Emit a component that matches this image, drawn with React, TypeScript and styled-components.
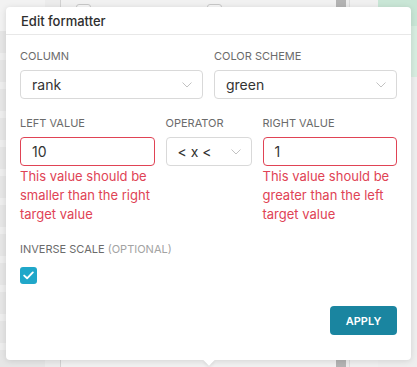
import React from "react";
import styled, { createGlobalStyle } from "styled-components";

const Global = createGlobalStyle`
  html, body { margin: 0; padding: 0; }
  body { font-family: Inter, "Noto Sans", sans-serif; background: #efefef; overflow: hidden; }
  * { box-sizing: border-box; }
`;

const Page = styled.div`
  position: relative;
  width: 417px;
  height: 367px;
  display: flex;
  overflow: hidden;
`;

const Sidebar = styled.div`
  width: 45px;
  flex-shrink: 0;
  background:
    linear-gradient(#f2f2f2 0 31px, transparent 31px),
    repeating-linear-gradient(#e6e6e6 0 22px, #eeeeee 22px 29px) 0 2px;
`;

const Gutter = styled.div`
  width: 16px;
  flex-shrink: 0;
  background: #ececec;
  border-right: 1px solid #d2d2d2;
`;

const Main = styled.div`
  width: 275px;
  flex-shrink: 0;
  background: #f1f1f1;
  display: flex;
  align-items: flex-start;
  gap: 116px;
  padding: 4px 0 0 15px;
`;

const GhostBox = styled.div`
  width: 15px;
  height: 15px;
  border: 1px solid #c8c8c8;
  border-radius: 3px;
  background: #f7f7f7;
`;

const Scroll = styled.div`
  width: 14px;
  flex-shrink: 0;
  background: #ececec;
  display: flex;
  justify-content: flex-start;
  border-right: 1px solid #dcdcdc;
`;

const Thumb = styled.div`
  width: 10px;
  background: #b3b3b3;
`;

const RightPane = styled.div`
  width: 28px;
  flex-shrink: 0;
  background: #f0f0f0;
`;

const Green = styled.div`
  flex: 1;
  background: linear-gradient(#c9e6d6 0 26px, #d7ede0 26px 77px, #eeeeee 77px);
`;

const Popover = styled.div`
  position: absolute;
  left: 6px;
  top: 7px;
  width: 405px;
  height: 353px;
  background: #fff;
  border-radius: 4px;
  box-shadow: 0 1px 6px rgba(0, 0, 0, 0.12);
  display: flex;
  flex-direction: column;
`;

const Arrow = styled.div`
  position: absolute;
  left: 199px;
  bottom: -4px;
  width: 8px;
  height: 8px;
  background: #fff;
  transform: rotate(45deg);
  box-shadow: 2px 2px 3px rgba(0, 0, 0, 0.06);
`;

const Header = styled.div`
  height: 28px;
  padding: 0 15px;
  display: flex;
  align-items: center;
  border-bottom: 1px solid #e8e8e8;
  font-size: 13px;
  font-weight: 500;
  color: #2e2e2e;
`;

const Body = styled.div`
  flex: 1;
  padding: 13px 14px 0 14px;
  display: flex;
  flex-direction: column;
`;

const Row = styled.div<{ $cols: string; $mb: number }>`
  display: grid;
  grid-template-columns: ${(p) => p.$cols};
  column-gap: 11px;
  margin-bottom: ${(p) => p.$mb}px;
`;

const Field = styled.div`
  display: flex;
  flex-direction: column;
`;

const Label = styled.div`
  font-size: 11px;
  line-height: 16px;
  color: #6b6b6b;
  text-transform: uppercase;
  margin-bottom: 6px;
  white-space: nowrap;
`;

const Optional = styled.span`
  color: #a3a3a3;
`;

const Box = styled.div<{ $error?: boolean }>`
  height: 29px;
  border: 1px solid ${(p) => (p.$error ? "#e04355" : "#d9d9d9")};
  border-radius: 4px;
  padding: 0 10px 0 11px;
  display: flex;
  align-items: center;
  justify-content: space-between;
  font-size: 14px;
  color: #333;
`;

const ErrorText = styled.div`
  font-size: 13px;
  line-height: 19px;
  color: #e04355;
  margin-top: 1px;
`;

const Check = styled.div`
  width: 17px;
  height: 17px;
  border-radius: 3px;
  background: #20a7c9;
  display: flex;
  align-items: center;
  justify-content: center;
  margin-top: 4px;
`;

const Footer = styled.div`
  display: flex;
  justify-content: flex-end;
  margin-top: 22px;
`;

const Button = styled.button`
  width: 67px;
  height: 29px;
  border: none;
  border-radius: 4px;
  background: #1a85a0;
  color: #fff;
  font-family: Inter, sans-serif;
  font-size: 11px;
  font-weight: 600;
  padding: 0;
`;

const Chevron = () => (
  <svg width="10" height="6" viewBox="0 0 10 6" fill="none">
    <path d="M0.5 0.5 L5 5 L9.5 0.5" stroke="#c2c2c2" strokeWidth="1" />
  </svg>
);

export default function App() {
  return (
    <>
      <Global />
      <Page>
        <Sidebar />
        <Gutter />
        <Main>
          <GhostBox />
          <GhostBox />
        </Main>
        <Scroll>
          <Thumb />
        </Scroll>
        <RightPane />
        <Green />
        <Popover>
          <Header>Edit formatter</Header>
          <Body>
            <Row $cols="1fr 1fr" $mb={16}>
              <Field>
                <Label>Column</Label>
                <Box>
                  rank
                  <Chevron />
                </Box>
              </Field>
              <Field>
                <Label>Color scheme</Label>
                <Box>
                  green
                  <Chevron />
                </Box>
              </Field>
            </Row>
            <Row $cols="1fr 86px 1fr" $mb={17}>
              <Field>
                <Label>Left value</Label>
                <Box $error>10</Box>
                <ErrorText>This value should be smaller than the right target value</ErrorText>
              </Field>
              <Field>
                <Label>Operator</Label>
                <Box>
                  {"< x <"}
                  <Chevron />
                </Box>
              </Field>
              <Field>
                <Label>Right value</Label>
                <Box $error>1</Box>
                <ErrorText>This value should be greater than the left target value</ErrorText>
              </Field>
            </Row>
            <Label>
              Inverse scale <Optional>(Optional)</Optional>
            </Label>
            <Check>
              <svg width="11" height="9" viewBox="0 0 11 9" fill="none">
                <path d="M1.2 4.6 L4.1 7.3 L9.8 1.4" stroke="#fff" strokeWidth="1.9" strokeLinecap="round" strokeLinejoin="round" />
              </svg>
            </Check>
            <Footer>
              <Button>APPLY</Button>
            </Footer>
          </Body>
          <Arrow />
        </Popover>
      </Page>
    </>
  );
}
